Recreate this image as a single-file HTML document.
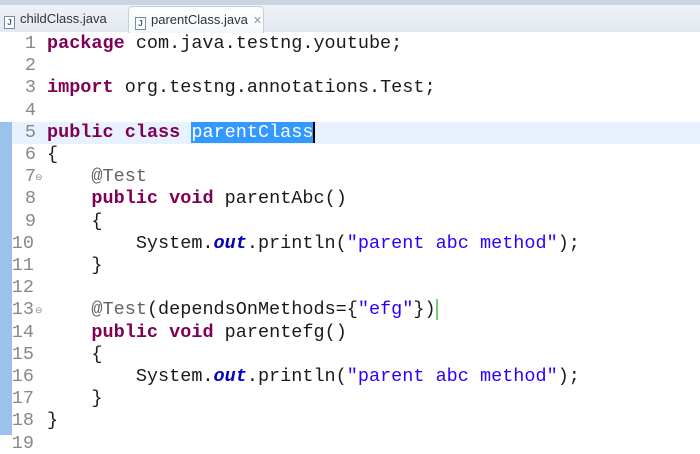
<!DOCTYPE html>
<html><head><style>
body{margin:0;width:700px;height:454px;overflow:hidden;background:#fff;position:relative;font-family:"Liberation Mono",monospace}
.top{position:absolute;left:0;top:0;width:700px;height:5px;background:#c9d5e2}
.bar{position:absolute;left:0;top:5px;width:700px;height:27px;background:linear-gradient(#eef2f6,#e3e9ef)}
.tab{position:absolute;top:6px;height:26px;font:13px "Liberation Sans",sans-serif;color:#333;line-height:26px;white-space:nowrap;overflow:hidden}
.act{left:128px;width:134px;background:linear-gradient(#fff,#f4f7fa);border:1px solid #c5cfd9;border-bottom:none;border-radius:5px 5px 0 0}
.ic{display:inline-block;width:9px;height:11px;border:1px solid #7a8aa0;background:#fff;font:bold 8px "Liberation Sans";color:#3a5d9a;text-align:center;line-height:11px;vertical-align:-2px;margin-right:5px}
.x{display:inline-block;width:10px;color:#999;font-size:11px;margin-left:5px}
.gut{position:absolute;left:0;top:122px;width:12px;height:313px;background:#9cc1ec}
.hl{position:absolute;left:12px;top:122px;width:688px;height:22px;background:#e8f2fe}
.ln{position:absolute;left:0;width:36px;text-align:right;color:#888;font-size:18.5px}
.cd{position:absolute;left:47px;font-size:18.5px;color:#1a1a1a;white-space:pre}
.k{color:#7f0055;font-weight:bold}.s{color:#2a00ff}.o{color:#0000c0;font-style:italic;font-weight:bold}.a{color:#646464}
.sel{background:#3399ff;color:#fff}
.fold{position:absolute;left:35px;font:9px sans-serif;color:#888}
</style></head><body>
<div class="top"></div><div class="bar"></div>
<div class="tab" style="left:4px"><span class="ic">J</span>childClass.java</div>
<div class="tab act"><span style="margin-left:6px" class="ic">J</span>parentClass.java<span class="x">✕</span></div>
<div class="gut"></div><div class="hl"></div>
<div id="c"></div>
<script>
var L=['<span class="k">package</span> com.java.testng.youtube;','','<span class="k">import</span> org.testng.annotations.Test;','','<span class="k">public</span> <span class="k">class</span> <span class="sel">parentClass</span><span style="border-left:2px solid #000"></span>','{','    <span class="a">@Test</span>','    <span class="k">public</span> <span class="k">void</span> parentAbc()','    {','        System.<span class="o">out</span>.println(<span class="s">"parent abc method"</span>);','    }','','    <span class="a">@Test</span>(dependsOnMethods={<span class="s">"efg"</span>})<span style="border-left:2px solid #7c7"></span>','    <span class="k">public</span> <span class="k">void</span> parentefg()','    {','        System.<span class="o">out</span>.println(<span class="s">"parent abc method"</span>);','    }','}',''];
var h='';for(var i=0;i<19;i++){var t=33+i*22.2;h+='<div class="ln" style="top:'+t+'px;'+(i>=9?'left:-2px':'')+'">'+(i+1)+'</div><div class="cd" style="top:'+t+'px">'+L[i]+'</div>';if(i==6||i==12)h+='<div class="fold" style="top:'+(t+6)+'px">⊖</div>';}
document.getElementById('c').innerHTML=h;
</script>
</body></html>
